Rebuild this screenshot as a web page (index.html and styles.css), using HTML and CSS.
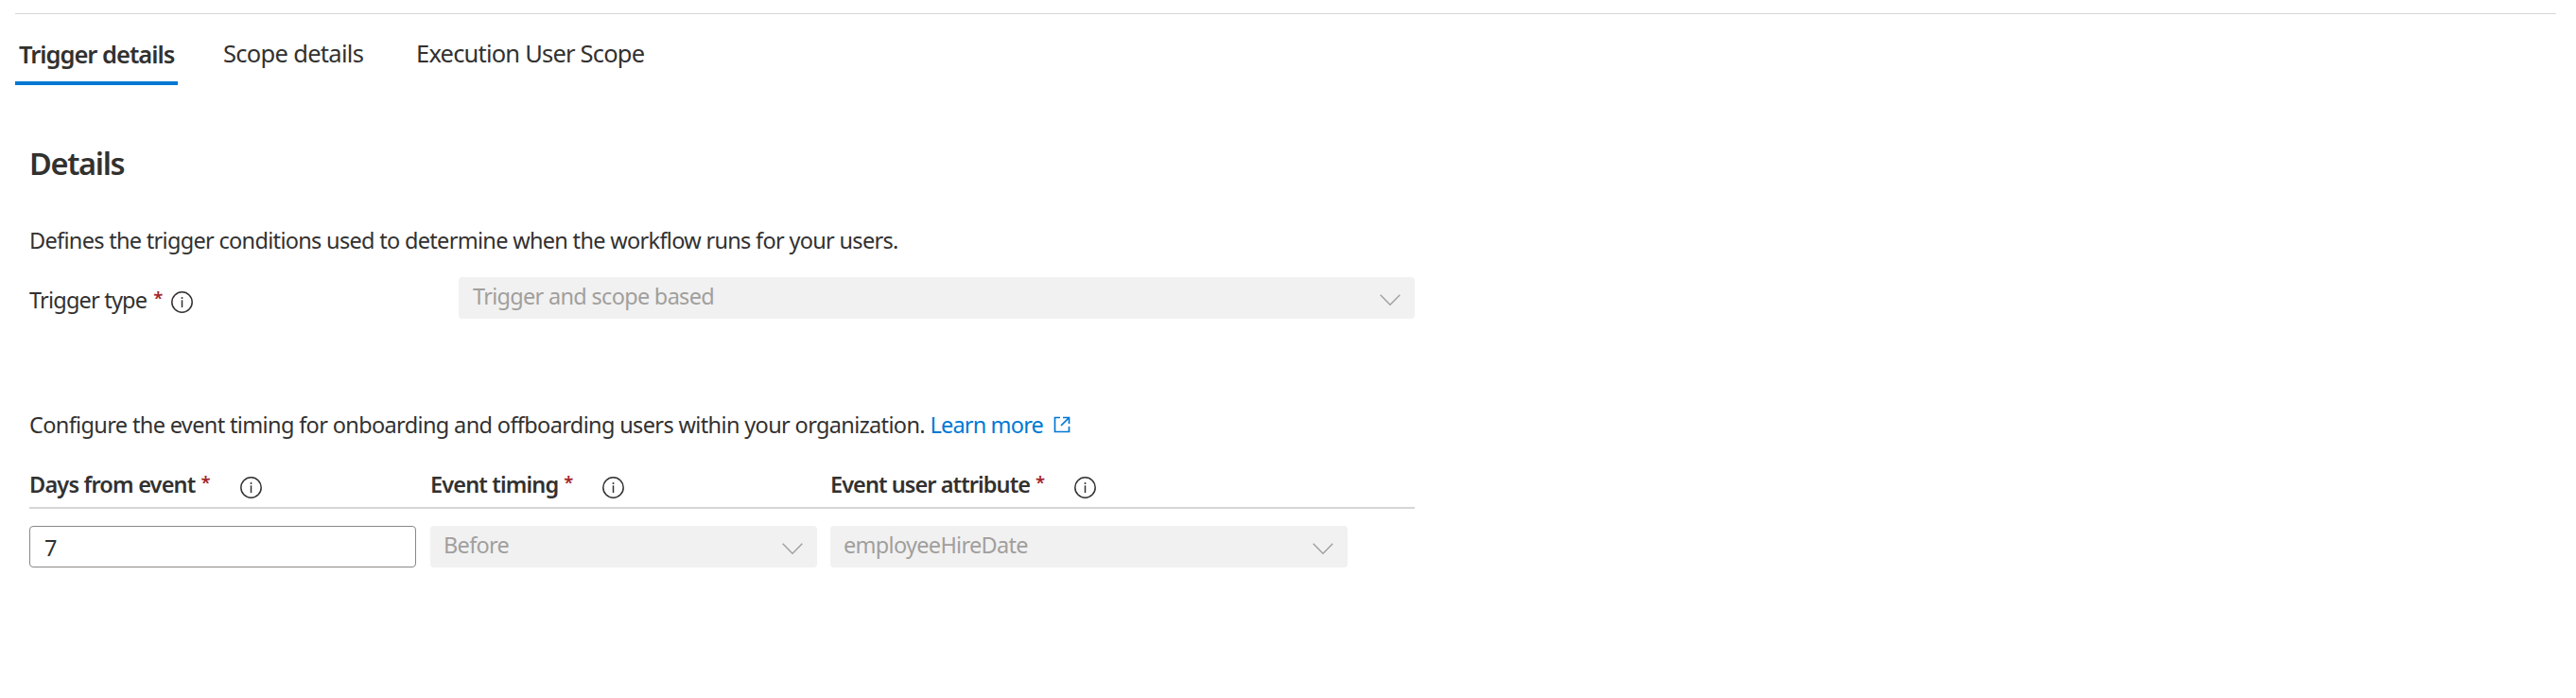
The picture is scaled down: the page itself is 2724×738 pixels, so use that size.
FILE: index.html
```html
<!DOCTYPE html>
<html lang="en">
<head>
<meta charset="utf-8">
<title>Trigger details</title>
<link rel="stylesheet" href="styles.css">
</head>
<body>
<svg class="defs" aria-hidden="true">
  <symbol id="info" viewBox="0 0 23 23"><circle cx="11.5" cy="11.5" r="10.7" fill="none" stroke="currentColor" stroke-width="1.5"/><path d="M11.500 9.300v7.700" fill="none" stroke="currentColor" stroke-width="1.500"/><circle cx="11.500" cy="6.900" r="1" fill="currentColor"/></symbol>
  <symbol id="chevron" viewBox="0 0 22 13"><path d="M.7.7 11 11.2 21.300.7" fill="none" stroke="currentColor" stroke-width="1.4"/></symbol>
</svg>
<main class="page">
  <nav class="tabs">
    <a class="tab tab-active">Trigger details</a>
    <a class="tab tab-scope">Scope details</a>
    <a class="tab tab-execution">Execution User Scope</a>
  </nav>
  <section class="content">
    <h2 class="heading">Details</h2>
    <p class="intro">Defines the trigger conditions used to determine when the workflow runs for your users.</p>
    <div class="field">
      <div class="label"><span>Trigger type</span><span class="required">*</span><svg class="info"><use href="#info"/></svg></div>
      <div class="select"><span>Trigger and scope based</span><svg class="chevron"><use href="#chevron"/></svg></div>
    </div>
    <p class="timing">Configure the event timing for onboarding and offboarding users within your organization. <a class="link">Learn more<svg class="external" viewBox="0 0 18 18"><path d="M7 1.500H1.500v15h15V11M10 1.500h6.500V8M16.500 1.500 8 10" fill="none" stroke="currentColor" stroke-width="1.700"/></svg></a></p>
    <div class="columns head">
      <div class="label days"><span>Days from event</span><span class="required">*</span><svg class="info"><use href="#info"/></svg></div>
      <div class="label event"><span>Event timing</span><span class="required">*</span><svg class="info"><use href="#info"/></svg></div>
      <div class="label attribute"><span>Event user attribute</span><span class="required">*</span><svg class="info"><use href="#info"/></svg></div>
    </div>
    <div class="columns values">
      <input class="number" type="text" value="7">
      <div class="select"><span>Before</span><svg class="chevron"><use href="#chevron"/></svg></div>
      <div class="select select-attribute"><span>employeeHireDate</span><svg class="chevron"><use href="#chevron"/></svg></div>
    </div>
  </section>
</main>
</body>
</html>
```
FILE: styles.css
```css
* { box-sizing: border-box; }
body {
  margin: 0;
  background: #fff;
  color: #323130;
  font: 23.5px/32px "Noto Sans", "Open Sans", sans-serif;
  letter-spacing: -.7px;
}
.defs { position: absolute; width: 0; height: 0; }
.page { padding: 14px 21px 0 16px; }
.tabs {
  display: flex;
  align-items: flex-start;
  height: 76px;
  border-top: 1px solid #d6d6d6;
  font-size: 25.5px;
}
.tab { padding-top: 25px; white-space: nowrap; }
.tab-active {
  width: 172px;
  height: 75px;
  padding: 26px 0 0 4px;
  border-bottom: 4px solid #0078d4;
  font-weight: 600;
  letter-spacing: -1px;
}
.tab-scope { width: 204px; margin-left: 48px; }
.tab-execution { letter-spacing: -.8px; }
.content { width: 1480px; padding: 61px 0 0 15px; }
.heading { margin: 0; font-size: 32.5px; line-height: 44px; font-weight: 600; letter-spacing: -1.3px; }
p { margin: 0; white-space: nowrap; }
.intro { margin-top: 43px; letter-spacing: -.69px; }
.field { display: flex; margin-top: 23px; }
.label { display: flex; align-items: flex-start; white-space: nowrap; }
.field .label { width: 454px; padding-top: 8px; letter-spacing: -.8px; }
.required {
  width: 10px;
  margin-left: 7px;
  color: #a4262c;
  font-size: 18.5px;
  line-height: 28px;
  font-weight: 600;
  letter-spacing: 0;
}
.info { width: 23px; height: 23px; margin: 7px 0 0 9px; }
.select {
  display: flex;
  justify-content: space-between;
  height: 44px;
  padding: 4px 15px 4px 14px;
  border-radius: 4px;
  background: #f1f1f1;
  color: #a19f9d;
}
.field .select { flex: 1; padding-left: 15px; }
.chevron { width: 22px; height: 13px; margin-top: 14px; }
.timing { margin-top: 96px; letter-spacing: -.64px; }
.link { color: #0078d4; letter-spacing: -.82px; }
.external { width: 18px; height: 18px; margin-left: 11px; }
.columns { display: grid; grid-template-columns: 424px 423px 618px; }
.head { height: 42px; margin-top: 31px; border-bottom: 2px solid #d6d6d6; font-weight: 600; }
.head .required { margin-left: 6px; }
.head .info { margin: 8px 0 0 31px; }
.days { letter-spacing: -.8px; }
.event { letter-spacing: -.85px; }
.attribute { letter-spacing: -.93px; }
.values { margin-top: 18px; }
.values > * { width: 409px; }
.values > .select-attribute { width: 547px; }
.number {
  height: 44px;
  padding: 2px 15px 0;
  border: 1px solid #8a8886;
  border-radius: 4px;
  color: #323130;
  font: inherit;
}
```
